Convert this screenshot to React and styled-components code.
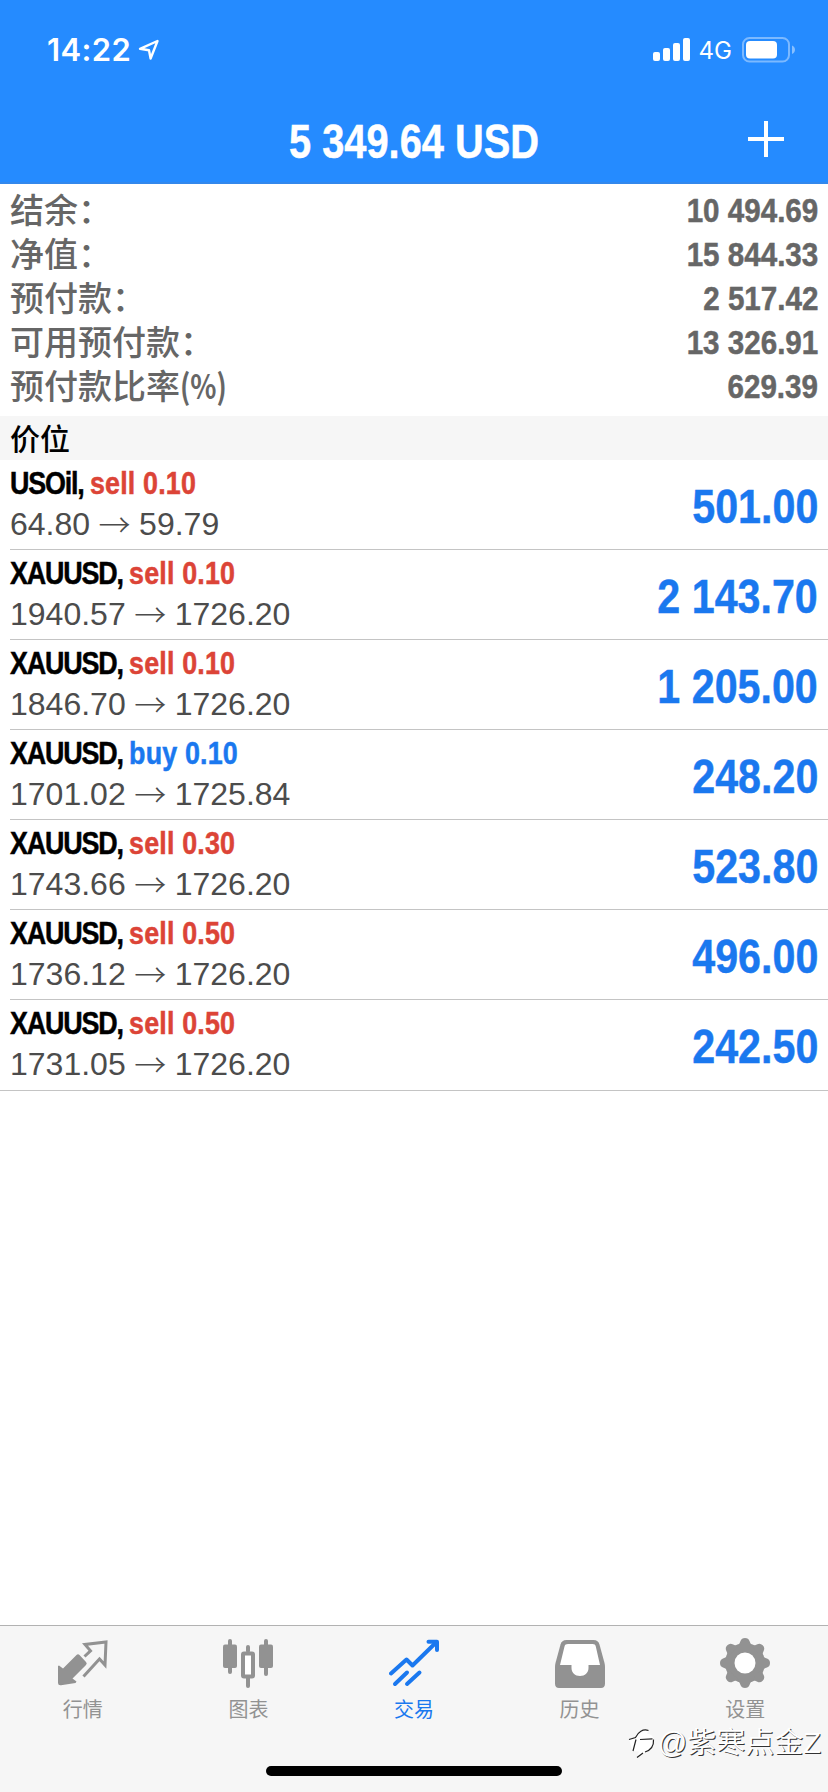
import React from "react";
import styled, { createGlobalStyle } from "styled-components";

const BLUE = "#1a78ef";
const RED = "#dc4437";
const GREY = "#929292";

const GlobalStyle = createGlobalStyle`
  * {
    box-sizing: border-box;
  }
  body {
    margin: 0;
    background: #fff;
    font-family: "Liberation Sans", "Noto Sans CJK SC", sans-serif;
  }
`;

const Screen = styled.div`
  display: flex;
  flex-direction: column;
  width: 828px;
  height: 1792px;
  overflow: hidden;
  background: #fff;
`;

const Header = styled.header`
  height: 184px;
  background: #258bff;
  border-bottom: 2px solid #3388ec;
  color: #fff;
`;

const StatusBar = styled.div`
  display: flex;
  align-items: center;
  height: 100px;
  padding: 0 32px 0 47px;
`;

const Time = styled.span`
  margin-right: 7px;
  font: 600 31px/40px Inter, sans-serif;
  letter-spacing: 0.4px;
`;

const Network = styled.span`
  margin: 2px 10px 0 8px;
  font: 400 24px/30px Inter, sans-serif;
`;

const Spacer = styled.div`
  flex: 1;
`;

const TitleBar = styled.div`
  display: grid;
  grid-template-columns: 100px 1fr 100px;
  align-items: center;
  height: 82px;
`;

// Narrow bold face, made from the regular width one
const Condensed = styled.span`
  font-weight: 700;
  white-space: pre;
  -webkit-text-stroke: 0.5px currentColor;
  transform: scaleX(${({ $scale }) => $scale || 0.85});
  transform-origin: ${({ $origin }) => $origin || "right"} center;
`;

const Title = styled(Condensed)`
  grid-column: 2;
  padding-top: 1px;
  text-align: center;
  font-size: 47.5px;
  line-height: 56px;
`;

const AddButton = styled.button`
  display: flex;
  margin: 0 0 4px 20px;
  padding: 0;
  border: 0;
  background: none;
  color: #fff;
`;

const Summary = styled.section`
  height: 232px;
  padding: 4px 10px 0 10px;
`;

const SummaryRow = styled.div`
  display: flex;
  justify-content: space-between;
  align-items: center;
  height: 44px;
  color: #666;
`;

const SummaryLabel = styled.span`
  margin-bottom: 2px;
  font: 500 34px/42px "Noto Sans CJK SC", sans-serif;
`;

const Unit = styled.span`
  display: inline-block;
  font-weight: 700;
  transform: scaleX(0.8);
  transform-origin: left center;
`;

const SummaryValue = styled(Condensed)`
  font-size: 34px;
  line-height: 44px;
`;

const SectionTitle = styled.h2`
  height: 44px;
  margin: 0;
  padding-left: 10px;
  background: #f6f6f6;
  color: #000;
  font: 500 30px/42px "Noto Sans CJK SC", sans-serif;
`;

const List = styled.ul`
  margin: 0;
  padding: 0;
  list-style: none;
  border-bottom: 1px solid #c4c4c4;
`;

const Position = styled.li`
  display: flex;
  justify-content: space-between;
  align-items: center;
  height: 90px;
  margin-left: 10px;
  padding-right: 10px;
  border-bottom: 1px solid #c4c4c4;

  &:last-child {
    height: 90px;
    border-bottom: 0;
  }
`;

const Details = styled.div`
  display: flex;
  flex-direction: column;
`;

const Deal = styled(Condensed)`
  margin-top: -2px;
  font-size: 32px;
  line-height: 41px;
  letter-spacing: -1.4px;
  color: #000;
`;

const Side = styled.span`
  letter-spacing: 0.2px;
  color: ${({ $side }) => ($side === "buy" ? BLUE : RED)};
`;

const Prices = styled.span`
  display: flex;
  color: #4c4c4c;
  font-size: 32px;
  line-height: 41px;
`;

const Arrow = styled.span`
  margin: 0 8.5px;
  font-family: "Noto Sans CJK SC", sans-serif;
  font-weight: 300;
  line-height: 38px;
`;

const Profit = styled(Condensed)`
  margin-top: 2px;
  font-size: 48.5px;
  line-height: 56px;
  color: ${BLUE};
`;

const TabBar = styled.nav`
  position: relative;
  display: flex;
  height: 167px;
  margin-top: auto;
  border-top: 1px solid #b2b2b2;
  background: #f6f6f6;
`;

const Tab = styled.div`
  display: flex;
  flex: 1;
  flex-direction: column;
  align-items: center;
  padding-top: 12px;
  color: ${({ $active }) => ($active ? BLUE : GREY)};
  font: 400 20px/30px "Noto Sans CJK SC", sans-serif;

  svg {
    margin-bottom: 6px;
  }
`;

const HomeIndicator = styled.div`
  position: absolute;
  left: 266px;
  bottom: 16px;
  width: 296px;
  height: 10px;
  border-radius: 5px;
  background: #000;
`;

const Watermark = styled.div`
  position: absolute;
  right: 7px;
  bottom: 29px;
  display: flex;
  align-items: center;
  gap: 1px;
  color: #fff;
  font: 350 29px/40px "Liberation Sans", "Noto Sans CJK SC", sans-serif;
  text-shadow: 1px 1px 0 #333;
`;

const LocationIcon = () => (
  <svg width="22" height="22" viewBox="0 0 22 22" fill="none">
    <path
      d="M19.5 2 2 9.8 11 11.2 12.6 19.5Z"
      stroke="#fff"
      strokeWidth="2.4"
      strokeLinejoin="round"
    />
  </svg>
);

const SignalIcon = () => (
  <svg width="38" height="24" viewBox="0 0 38 24" fill="#fff">
    <rect x="0" y="14" width="7" height="9" rx="2" />
    <rect x="10" y="10" width="7" height="13" rx="2" />
    <rect x="20" y="5" width="7" height="18" rx="2" />
    <rect x="30" y="0" width="7" height="23" rx="2" />
  </svg>
);

const BatteryIcon = () => (
  <svg width="54" height="26" viewBox="0 0 54 26">
    <rect
      x="1"
      y="1"
      width="46"
      height="23.5"
      rx="6.5"
      fill="none"
      stroke="#fff"
      strokeOpacity="0.4"
      strokeWidth="2"
    />
    <rect x="4" y="4" width="31" height="17.5" rx="4" fill="#fff" />
    <path d="M50 8.5c2 1 3 2.5 3 4.3s-1 3.3-3 4.3z" fill="#fff" opacity="0.45" />
  </svg>
);

const PlusIcon = () => (
  <svg width="36" height="36" viewBox="0 0 36 36" stroke="currentColor" strokeWidth="4">
    <path d="M18 0v36M0 18h36" />
  </svg>
);

const QuotesIcon = () => (
  <svg width="50" height="50" viewBox="0 0 50 50">
    <path
      d="M18.5 17Q20 15.5 21.500 17L28 24Q29.500 25.500 28 27L14.500 40.500 18.500 43.500 17.500 45 3 47.200Q0 47.500 0 45V28L1 27.500 5 30.500Z"
      fill="currentColor"
    />
    <path
      d="M26.500 18.500 32.500 12.800 27 6.500 48 4 47 27 41.500 21 25.500 38.500"
      fill="none"
      stroke="currentColor"
      strokeWidth="3"
    />
  </svg>
);

const ChartIcon = () => (
  <svg width="50" height="50" viewBox="0 0 50 50" fill="currentColor">
    <rect x="5" y="1" width="4" height="35" rx="2" />
    <rect x="0" y="6.5" width="14" height="23.5" rx="2" />
    <rect x="41" y="1" width="4" height="37" rx="2" />
    <rect x="36" y="6.5" width="14" height="23.5" rx="2" />
    <rect x="23" y="7" width="4" height="8" rx="2" />
    <rect x="23" y="38" width="4" height="12" rx="2" />
    <rect
      x="20"
      y="15.5"
      width="10"
      height="23"
      rx="1"
      fill="#fff"
      stroke="currentColor"
      strokeWidth="4"
    />
  </svg>
);

const TradeIcon = () => (
  <svg
    width="50"
    height="50"
    viewBox="0 0 50 50"
    fill="none"
    stroke="currentColor"
    strokeWidth="4"
    strokeLinecap="round"
    strokeLinejoin="round"
  >
    <path d="M2 35.5 17.5 21.5 23.5 27.5 47 4.5" />
    <path d="M39.5 3.8H48V12" />
    <path d="M6 46 18 34.5M18 46 30.5 34.5" />
  </svg>
);

const HistoryIcon = () => (
  <svg width="50" height="50" viewBox="0 0 50 50">
    <path
      d="M11.5 2h27c3.500 0 5 1.500 6 4.500L49.500 25c.4 1.500.5 2.500.5 4v16.500c0 3-1.500 4.500-4 4.500H4c-2.500 0-4-1.500-4-4.500V29c0-1.500.1-2.500.5-4L5.500 6.500c1-3 2.500-4.500 6-4.500Z"
      fill="currentColor"
    />
    <path
      d="M13 6h24.500c2 0 2.800.7 3.300 2.500L45 27H33.500v3c0 4.500-3.500 8-8.500 8s-8.500-3.500-8.500-8v-3H5l4.500-18.500C10 6.700 11 6 13 6Z"
      fill="#fff"
    />
  </svg>
);

const SettingsIcon = () => (
  <svg width="50" height="50" viewBox="0 0 50 50" fill="currentColor">
    <circle cx="25" cy="25" r="20" />
    {[0, 45, 90, 135, 180, 225, 270, 315].map((angle) => (
      <path
        key={angle}
        d="M16 8.5c3-1 3.500-3 4.500-5.500Q21.500 0 25 0t4.500 3c1 2.500 1.500 4.500 4.500 5.500z"
        transform={`rotate(${angle} 25 25)`}
      />
    ))}
    <circle cx="25" cy="25" r="10.5" fill="#fff" />
  </svg>
);

const WatermarkIcon = () => (
  <svg width="30" height="34" viewBox="0 0 30 34" fill="none">
    <path
      d="M2 13 8 11.500C11 5 16 2.500 21.500 4.500L20 7.500C24 8 26 10 26.500 13 27 19 25 23 20.500 25L10 31.500 12 25.500 5.500 25Z"
      fill="#fff"
    />
    <path
      d="M2 13.500 8.500 11.500C11 6 16 2.500 21.500 4.500M6 25 9 13.500M13 13.500 25.500 12.800M26.500 13.500C27 20 24 24 18 26M16 27 10 31.500"
      stroke="#222"
      strokeWidth="1.2"
    />
  </svg>
);

const summary = [
  { label: "结余：", value: "10 494.69" },
  { label: "净值：", value: "15 844.33" },
  { label: "预付款：", value: "2 517.42" },
  { label: "可用预付款：", value: "13 326.91" },
  { label: "预付款比率", unit: "(%)", value: "629.39" },
];

const positions = [
  { symbol: "USOil", side: "sell", lots: "0.10", open: "64.80", current: "59.79", profit: "501.00" },
  { symbol: "XAUUSD", side: "sell", lots: "0.10", open: "1940.57", current: "1726.20", profit: "2 143.70" },
  { symbol: "XAUUSD", side: "sell", lots: "0.10", open: "1846.70", current: "1726.20", profit: "1 205.00" },
  { symbol: "XAUUSD", side: "buy", lots: "0.10", open: "1701.02", current: "1725.84", profit: "248.20" },
  { symbol: "XAUUSD", side: "sell", lots: "0.30", open: "1743.66", current: "1726.20", profit: "523.80" },
  { symbol: "XAUUSD", side: "sell", lots: "0.50", open: "1736.12", current: "1726.20", profit: "496.00" },
  { symbol: "XAUUSD", side: "sell", lots: "0.50", open: "1731.05", current: "1726.20", profit: "242.50" },
];

const tabs = [
  { label: "行情", Icon: QuotesIcon },
  { label: "图表", Icon: ChartIcon },
  { label: "交易", Icon: TradeIcon, active: true },
  { label: "历史", Icon: HistoryIcon },
  { label: "设置", Icon: SettingsIcon },
];

const App = () => (
  <>
    <GlobalStyle />
    <Screen>
      <Header>
        <StatusBar>
          <Time>14:22</Time>
          <LocationIcon />
          <Spacer />
          <SignalIcon />
          <Network>4G</Network>
          <BatteryIcon />
        </StatusBar>
        <TitleBar>
          <Title $scale={0.838} $origin="center">
            5 349.64 USD
          </Title>
          <AddButton>
            <PlusIcon />
          </AddButton>
        </TitleBar>
      </Header>
      <Summary>
        {summary.map(({ label, unit, value }) => (
          <SummaryRow key={label}>
            <SummaryLabel>
              {label}
              {unit && <Unit>{unit}</Unit>}
            </SummaryLabel>
            <SummaryValue $scale={0.87}>{value}</SummaryValue>
          </SummaryRow>
        ))}
      </Summary>
      <SectionTitle>价位</SectionTitle>
      <List>
        {positions.map(({ symbol, side, lots, open, current, profit }) => (
          <Position key={`${symbol}-${open}`}>
            <Details>
              <Deal $scale={0.84} $origin="left">
                {symbol}, <Side $side={side}>{side} {lots}</Side>
              </Deal>
              <Prices>
                {open}
                <Arrow>→</Arrow>
                {current}
              </Prices>
            </Details>
            <Profit>{profit}</Profit>
          </Position>
        ))}
      </List>
      <TabBar>
        {tabs.map(({ label, Icon, active }) => (
          <Tab key={label} $active={active}>
            <Icon />
            {label}
          </Tab>
        ))}
        <HomeIndicator />
        <Watermark>
          <WatermarkIcon />
          @紫寒点金Z
        </Watermark>
      </TabBar>
    </Screen>
  </>
);

export default App;
